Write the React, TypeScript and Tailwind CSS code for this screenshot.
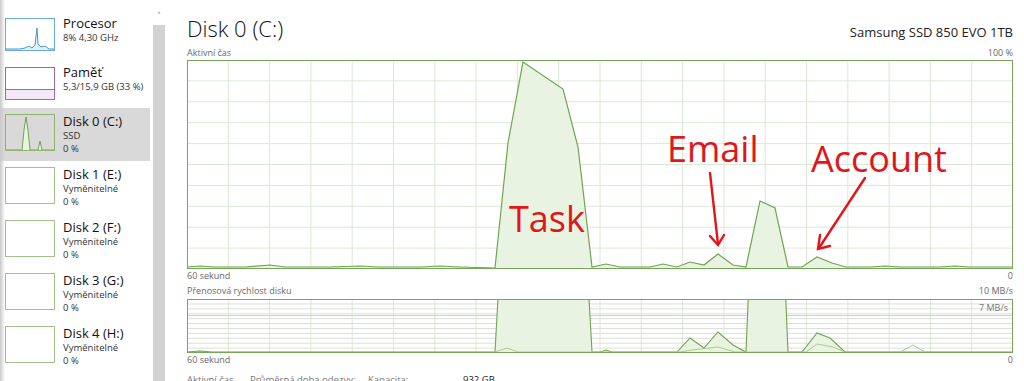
import React from "react";

const FONT = { fontFamily: '"Open Sans", "Noto Sans", sans-serif' };

type Pt = [number, number];

const topPts: Pt[] = [
  [187, 267], [200, 266], [215, 267], [245, 267], [270, 265], [285, 267], [330, 267], [360, 266],
  [380, 267], [420, 267], [440, 266], [460, 267], [495, 268], [508, 143], [523, 62], [563, 89],
  [578, 147], [592, 267], [606, 264], [620, 267], [650, 267], [663, 264], [677, 267], [690, 262],
  [704, 265], [718, 254], [733, 265], [746, 267], [760, 201], [775, 208], [788, 267], [802, 267],
  [817, 257], [832, 263], [846, 267], [870, 267], [885, 266], [900, 267], [940, 267], [955, 266],
  [970, 267], [1012, 267],
];

const readPts: Pt[] = [
  [187, 352], [200, 351], [212, 352], [495, 352], [499, 280], [588, 280], [592, 352], [600, 352],
  [606, 350], [612, 352], [677, 352], [690, 338], [704, 348], [718, 332], [733, 345], [746, 352],
  [749, 280], [785, 280], [788, 352], [802, 352], [817, 333], [830, 338], [845, 352], [1012, 352],
];

const writePts: Pt[] = [
  [495, 352], [507, 348], [518, 352], [680, 352], [692, 350], [718, 347], [735, 352], [806, 352],
  [817, 344], [833, 347], [845, 352], [900, 352], [913, 345], [925, 352],
];

const rel = (pts: Pt[], oy: number) => pts.map(([x, y]) => `${x - 187},${y - oy}`).join(" ");

const GREEN = "#78a658";
const GRID = "#dde8d4";
const RED = "#e2151b";

function ActiveChart() {
  const W = 826;
  const H = 209;
  return (
    <svg width={W} height={H} className="block shrink-0 overflow-hidden">
      {Array.from({ length: 19 }, (_, i) => (
        <line key={"v" + i} x1={((i + 1) * W) / 20} x2={((i + 1) * W) / 20} y1={0} y2={H} stroke={GRID} />
      ))}
      {Array.from({ length: 9 }, (_, i) => (
        <line key={"h" + i} x1={0} x2={W} y1={((i + 1) * H) / 10} y2={((i + 1) * H) / 10} stroke={GRID} />
      ))}
      <polygon points={rel(topPts, 60) + ` ${W},${H} 0,${H}`} fill="#e9f3e1" />
      <polyline points={rel(topPts, 60)} fill="none" stroke="#6fa450" strokeWidth={1.2} />
      <rect x={0.5} y={0.5} width={W - 1} height={H - 1} fill="none" stroke={GREEN} />

      <g fill={RED} style={FONT} fontSize={36}>
        <text x={322} y={172}>Task</text>
        <text x={480} y={102}>Email</text>
        <text x={624} y={112}>Account</text>
      </g>
      <g stroke={RED} strokeWidth={2.4} fill="none" strokeLinecap="round">
        <line x1={523} y1={113} x2={531} y2={184} />
        <polyline points="523,176 531,185 537,175" />
        <line x1={678} y1={118} x2={632} y2={188} />
        <polyline points="633,175 631,189 643,186" />
      </g>
    </svg>
  );
}

function TransferChart() {
  const W = 826;
  const H = 54;
  return (
    <svg width={W} height={H} className="block shrink-0 overflow-hidden">
      {Array.from({ length: 19 }, (_, i) => (
        <line key={"v" + i} x1={((i + 1) * W) / 20} x2={((i + 1) * W) / 20} y1={0} y2={H} stroke={GRID} />
      ))}
      {Array.from({ length: 10 }, (_, i) => (
        <line key={"h" + i} x1={0} x2={W} y1={((i + 1) * H) / 11} y2={((i + 1) * H) / 11} stroke="#dcdfd8" />
      ))}
      <line x1={0} x2={W} y1={16.5} y2={16.5} stroke="#c7d6bb" />
      <polygon points={rel(readPts, 299)} fill="#e9f3e1" />
      <polyline points={rel(readPts, 299)} fill="none" stroke="#6fa450" strokeWidth={1.1} />
      <polyline points={rel(writePts, 299)} fill="none" stroke="#a9cc8e" strokeWidth={1} />
      <rect x={0.5} y={0.5} width={W - 1} height={H - 1} fill="none" stroke={GREEN} />
      <text x={W - 5} y={12} textAnchor="end" fontSize={9} fill="#777" style={FONT}>
        7 MB/s
      </text>
    </svg>
  );
}

function Thumb({ kind }: { kind: "cpu" | "mem" | "disk0" | "disk" }) {
  if (kind === "cpu") {
    return (
      <svg width={50} height={33} className="block shrink-0">
        <polygon points="1,31 15,31 20,30 24,28 27,30 30,27 32,10 33,26 36,29 40,28 44,31 49,31 49,32 1,32" fill="#e3f0f9" />
        <polyline points="1,31 15,31 20,30 24,28 27,30 30,27 32,10 33,26 36,29 40,28 44,31 49,31" fill="none" stroke="#4b97c9" strokeWidth={1} />
        <rect x={0.5} y={0.5} width={49} height={32} fill="none" stroke="#6aaad6" />
      </svg>
    );
  }
  if (kind === "mem") {
    return (
      <svg width={50} height={33} className="block shrink-0">
        <rect x={1} y={22} width={48} height={10} fill="#f3e9f6" />
        <line x1={1} x2={49} y1={22.5} y2={22.5} stroke="#a065b5" />
        <rect x={0.5} y={0.5} width={49} height={32} fill="none" stroke="#a065b5" />
      </svg>
    );
  }
  if (kind === "disk0") {
    const p = "1,36 17,36 19,16 21,3 23,16 25,36 33,36 35,27 37,36 49,36";
    return (
      <svg width={50} height={37} className="block shrink-0">
        <polygon points={p} fill="#e9f3e1" />
        <polyline points={p} fill="none" stroke="#6fa450" />
        <rect x={0.5} y={0.5} width={49} height={36} fill="none" stroke="#8db56e" />
      </svg>
    );
  }
  return (
    <svg width={50} height={37} className="block shrink-0">
      <rect x={0.5} y={0.5} width={49} height={36} fill="none" stroke="#a3c28a" />
    </svg>
  );
}

const items = [
  { kind: "cpu" as const, title: "Procesor", lines: ["8% 4,30 GHz"] },
  { kind: "mem" as const, title: "Paměť", lines: ["5,3/15,9 GB (33 %)"] },
  { kind: "disk0" as const, title: "Disk 0 (C:)", lines: ["SSD", "0 %"], selected: true },
  { kind: "disk" as const, title: "Disk 1 (E:)", lines: ["Vyměnitelné", "0 %"] },
  { kind: "disk" as const, title: "Disk 2 (F:)", lines: ["Vyměnitelné", "0 %"] },
  { kind: "disk" as const, title: "Disk 3 (G:)", lines: ["Vyměnitelné", "0 %"] },
  { kind: "disk" as const, title: "Disk 4 (H:)", lines: ["Vyměnitelné", "0 %"] },
];

export default function App() {
  return (
    <div className="flex h-[381px] w-[1024px] overflow-hidden bg-white text-[#1a1a1a]" style={FONT}>
      {/* sidebar */}
      <div className="relative w-[150px] shrink-0 pt-[10px]">
        <div className="absolute left-0 top-0 h-full w-[5px] bg-gradient-to-r from-[#c9c9c9] to-transparent" />
        {items.map((it) => (
          <div
            key={it.title}
            className={`flex shrink-0 gap-[8px] pl-[5px] ${it.lines.length > 1 ? "h-[53px]" : "h-[49px]"} ${
              it.selected ? "bg-[#d9d9d9]" : ""
            }`}
          >
            <div className={it.lines.length > 1 ? "mt-[6px]" : "mt-[8px]"}>
              <Thumb kind={it.kind} />
            </div>
            <div className="mt-[7px] flex flex-col whitespace-nowrap">
              <span className="text-[13px] leading-[13px] text-[#111]">{it.title}</span>
              {it.lines.map((l, i) => (
                <span key={i} className={`text-[9.5px] leading-[13px] text-[#333] ${i === 0 ? "mt-[1px]" : ""}`}>
                  {l}
                </span>
              ))}
            </div>
          </div>
        ))}
      </div>

      {/* scrollbar */}
      <div className="flex w-[19px] shrink-0 flex-col items-center pl-[3px] pr-[4px]">
        <span className="mt-[10px] h-[12px] text-[10px] leading-[12px] text-[#555]">˄</span>
        <div className="mt-[3px] w-full flex-1 bg-[#d2d2d2]" />
      </div>

      {/* main */}
      <div className="flex w-[855px] shrink-0 flex-col overflow-hidden whitespace-nowrap pl-[18px] pr-[11px] pt-[17px]">
        <div className="flex h-[28px] shrink-0 items-baseline justify-between">
          <span className="text-[22px] font-light leading-[22px] text-[#111]">Disk 0 (C:)</span>
          <span className="text-[13px] leading-[22px] text-[#222]">Samsung SSD 850 EVO 1TB</span>
        </div>
        <div className="flex h-[15px] shrink-0 items-center justify-between text-[9px] text-[#6a6a6a]">
          <span>Aktivní čas</span>
          <span>100 %</span>
        </div>
        <ActiveChart />
        <div className="flex h-[14px] shrink-0 items-center justify-between text-[9px] text-[#6a6a6a]">
          <span>60 sekund</span>
          <span>0</span>
        </div>
        <div className="flex h-[16px] shrink-0 items-center justify-between text-[9px] text-[#6a6a6a]">
          <span>Přenosová rychlost disku</span>
          <span>10 MB/s</span>
        </div>
        <TransferChart />
        <div className="flex h-[14px] shrink-0 items-center justify-between text-[9px] text-[#6a6a6a]">
          <span>60 sekund</span>
          <span>0</span>
        </div>
        <div className="mt-[5px] flex shrink-0 text-[9.5px] leading-[16px] text-[#777]">
          <span className="w-[63px]">Aktivní čas</span>
          <span className="w-[118px]">Průměrná doba odezvy:</span>
          <span className="w-[95px]">Kapacita:</span>
          <span className="text-[#222]">932 GB</span>
        </div>
      </div>
    </div>
  );
}
